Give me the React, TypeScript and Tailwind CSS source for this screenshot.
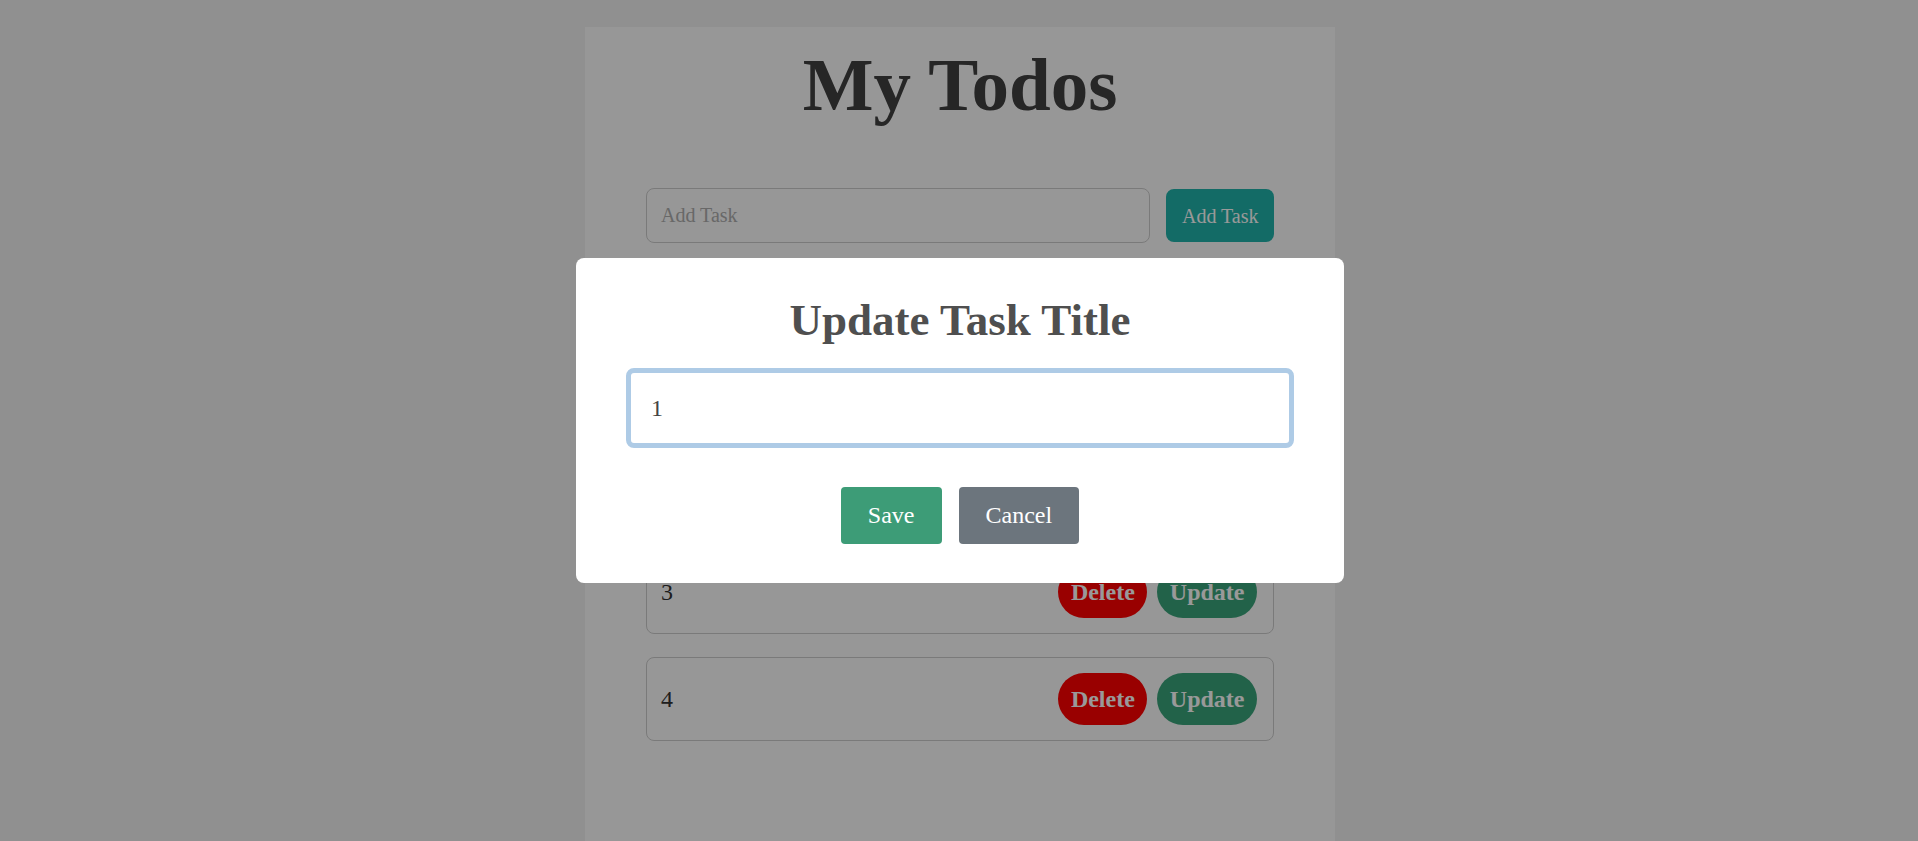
import { useState } from "react";

const todos = ["1", "2", "3", "4"];

const App = () => {
  const [title, setTitle] = useState("1");

  return (
    <div className="relative h-screen overflow-hidden bg-[#f1f1f1] pl-[2px] pt-[27px] font-['Liberation_Serif','Times_New_Roman',serif]">
      <div className="mx-auto h-full w-[750px] bg-[#fcfcfc] px-[61px] pt-[18px]">
        <h1 className="text-center text-[75px] font-bold leading-[80px] text-[#404040]">My Todos</h1>

        <form className="mt-[63px] flex items-center gap-4" onSubmit={(e) => e.preventDefault()}>
          <input
            type="text"
            placeholder="Add Task"
            className="h-[55px] min-w-0 flex-1 rounded-lg border border-[#cccccc] bg-transparent px-[14px] text-[20px] text-[#333] outline-none placeholder:text-[#adadad]"
          />
          <button className="h-[53px] rounded-lg bg-[#20b2aa] px-[15.5px] text-[20px] leading-[24px] text-white">
            Add Task
          </button>
        </form>

        <ul className="mt-[93px] flex flex-col gap-[23px]">
          {todos.map((t) => (
            <li
              key={t}
              className="flex items-center justify-between rounded-lg border border-[#cccccc] py-[15px] pl-[14px] pr-4"
            >
              <span className="text-[24px] leading-[28px] text-[#333]">{t}</span>
              <div className="flex gap-[10px]">
                <button className="rounded-full bg-[#ff0000] px-[12.5px] py-3 text-[24px] font-bold leading-[28px] text-white">
                  Delete
                </button>
                <button className="rounded-full bg-[#3aa37a] px-[12.5px] py-3 text-[24px] font-bold leading-[27px] text-white">
                  Update
                </button>
              </div>
            </li>
          ))}
        </ul>
      </div>

      <div className="fixed inset-0 flex items-center justify-center bg-black/40 pl-[2px]">
        <div className="w-[768px] rounded-lg bg-white px-[50px] pb-[39px] pt-[37px]">
          <h2 className="text-center text-[45px] font-bold leading-[50px] text-[#4f4f4f]">Update Task Title</h2>
          <input
            type="text"
            autoFocus
            value={title}
            onChange={(e) => setTitle(e.target.value)}
            onFocus={(e) => e.currentTarget.setSelectionRange(title.length, title.length)}
            className="mt-[23px] h-[80px] w-full rounded-[8px] border-[5px] border-[#aecbe6] px-5 text-[24px] text-[#444] outline-none"
          />
          <div className="mt-[39px] flex justify-center gap-[17px]">
            <button className="rounded bg-[#3d9c77] px-[27px] py-[15px] text-[24px] leading-[27px] text-white">
              Save
            </button>
            <button className="rounded bg-[#6c757d] px-[27px] py-[15px] text-[24px] leading-[27px] text-white">
              Cancel
            </button>
          </div>
        </div>
      </div>
    </div>
  );
};

export default App;
